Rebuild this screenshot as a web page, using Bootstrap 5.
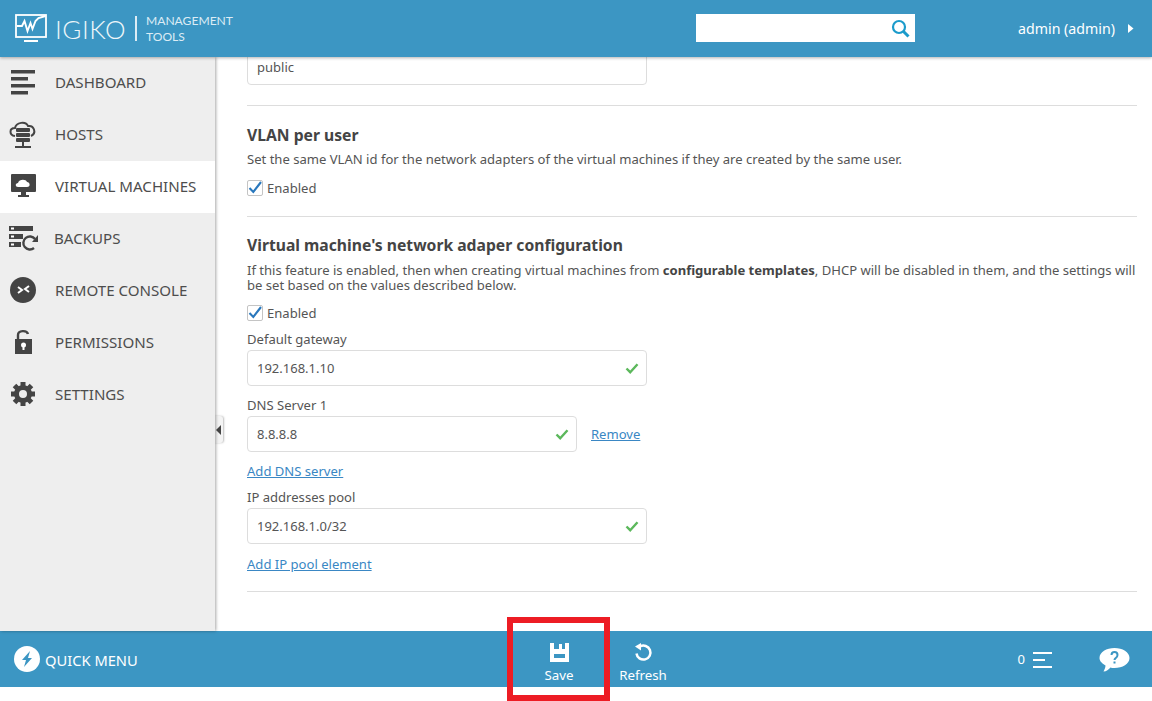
<!DOCTYPE html>
<html lang="en">
<head>
  <meta charset="UTF-8" />
  <title>Igiko Management Tools</title>
  <link href="https://cdn.jsdelivr.net/npm/bootstrap@5.3.2/dist/css/bootstrap.min.css" rel="stylesheet"/>
  <style>
    html, body { height: 701px; overflow: hidden; background: #fff; }
    body { font-family: "Noto Sans", "DejaVu Sans", sans-serif; font-size: 13.07px; color: #555; }
    .app-shell { height: 687px; position: relative; }
    .top-bar { height: 57px; background: #3c96c3; color: #fff; box-shadow: 0 1px 3px rgba(0,0,0,.3); position: relative; z-index: 3; }
    .logo-area { padding-left: 15px; width: 696px; }
    .logo-word { font-family: Lato, sans-serif; font-weight: 300; font-size: 26px; letter-spacing: .5px; line-height: 1; margin-left: 8px; color: #eef6fa; }
    .logo-sep { width: 2px; height: 25px; background: #dcecf5; margin: 0 9px 0 9px; }
    .logo-sub { font-family: Lato, sans-serif; font-size: 12.1px; line-height: 16px; color: #dcecf5; }
    .search-box { width: 219px; height: 28px; background: #fff; padding-right: 5px; margin-bottom: 1px; }
    .user-menu { font-size: 14.2px; margin-right: 18px; gap: 13px; }
    .mid-area { height: 574px; }
    .side-nav { width: 215px; background: #eee; box-shadow: 1px 0 3px rgba(0,0,0,.35); position: relative; z-index: 2; }
    .side-item { height: 52px; font-size: 15.1px; color: #4d4d4d; text-decoration: none; padding-bottom: 2px; }
    .side-item.active-item { background: #fff; }
    .side-ico { width: 55px; flex: none; padding-left: 9px; }
    .side-toggle { position: absolute; left: 214px; top: 359px; width: 9px; height: 27px; background: #f4f4f4; border-radius: 0 3px 3px 0; box-shadow: 1px 0 2px rgba(0,0,0,.25); }
    .page-body { overflow: hidden; padding: 0 15px 0 32px; }
    .scroll-inner { margin-top: -8px; }
    .setting-input { height: 36px; width: 400px; font-size: 13px; color: #555; border-color: #ddd !important; padding: 0 9px; border-radius: 4px; }
    .setting-input.is-valid { background-size: 14px 14px; background-position: right 7px center; padding-right: 30px;
      background-image: url("data:image/svg+xml,%3csvg xmlns='http://www.w3.org/2000/svg' viewBox='0 0 14 14'%3e%3cpath fill='none' stroke='%235cb85c' stroke-width='2.4' d='M1.5 7.5l3.7 3.7 7.3-8'/%3e%3c/svg%3e"); }
    .setting-input.is-valid:focus { box-shadow: none; }
    .short-input { width: 330px; }
    .setting-label { display: block; height: 15px; line-height: 15px; margin: 0 0 3px; }
    .setting-title { font-size: 15.7px; font-weight: 700; color: #444; line-height: 18px; margin: 0; font-family: "Noto Sans", sans-serif; }
    .setting-text { line-height: 15px; margin: 0; }
    .setting-text b { color: #444; }
    .setting-rule { border: 0; border-top: 1px solid #ddd; opacity: 1; margin: 0; }
    .check-row { height: 16px; line-height: 16px; gap: 4px; }
    .setting-check { appearance: none; width: 16px; height: 16px; margin: 0; border: 1px solid #c4c4c4; border-radius: 2px; background: #fff center / 16px no-repeat;
      background-image: url("data:image/svg+xml,%3csvg xmlns='http://www.w3.org/2000/svg' viewBox='0 0 16 16'%3e%3cpath fill='none' stroke='%232a78bd' stroke-width='2.1' d='M2.500 8l3.800 4 7.700-10'/%3e%3c/svg%3e"); }
    .link-line { line-height: 15px; }
    .setting-link { color: #3a87c4; line-height: 15px; }
    .remove-link { margin-left: 14px; }
    .foot-bar { height: 56px; background: #3c96c3; color: #fff; position: relative; }
    .quick-menu { font-size: 14.7px; padding-left: 14px; width: 517px; gap: 5px; }
    .quick-menu span { padding-top: 2px; }
    .foot-actions { font-size: 13.3px; line-height: 15px; }
    .foot-btn { width: 84px; text-align: center; padding-top: 12px; }
    .foot-btn svg { display: block; margin: 0 auto 6px; }
    .foot-right { margin-left: auto; padding-right: 22px; padding-top: 1px; gap: 47px; }
    .red-mark { position: absolute; left: 507px; top: 617px; width: 103px; height: 84px; border: 6px solid #ed1c24; z-index: 5; }
  </style>
</head>
<body>
  <div class="app-shell d-flex flex-column">

    <!-- Header -->
    <div class="top-bar d-flex align-items-center">
      <div class="logo-area d-flex align-items-center">
        <svg width="32" height="29" viewBox="0 0 32 29" fill="none" stroke="#fff">
          <rect x="1" y="1" width="30" height="22" stroke-width="1.800"/>
          <path d="M2 12h5l2.500-5 3 10 3-8 2 6 3-8 3-3 7-2" stroke-width="1.900"/>
          <path d="M9 27h14" stroke-width="2"/>
        </svg>
        <span class="logo-word">IGIKO</span>
        <span class="logo-sep"></span>
        <span class="logo-sub">MANAGEMENT<br>TOOLS</span>
      </div>
      <div class="search-box d-flex align-items-center justify-content-end">
        <svg width="19" height="19" viewBox="0 0 19 19" fill="none" stroke="#1b9bcb"><circle cx="8" cy="8" r="6" stroke-width="2.200"/><path d="M12.500 12.500l5 5" stroke-width="3"/></svg>
      </div>
      <div class="user-menu ms-auto d-flex align-items-center">
        <span>admin (admin)</span>
        <svg width="6" height="9" viewBox="0 0 6 9"><path fill="#fff" d="M0 0l5.500 4.500-5.500 4.500z"/></svg>
      </div>
    </div>

    <div class="mid-area d-flex position-relative">
      <!-- Sidebar -->
      <nav class="side-nav d-flex flex-column flex-shrink-0">
        <a class="side-item d-flex align-items-center" href="#">
          <span class="side-ico"><svg width="26" height="26" viewBox="0 0 26 26" fill="#444"><rect x="2" y="1" width="24" height="3.500"/><rect x="2" y="8" width="17" height="3.500"/><rect x="2" y="15" width="24" height="3.500"/><rect x="2" y="22" width="17" height="3.500"/></svg></span>DASHBOARD
        </a>
        <a class="side-item d-flex align-items-center" href="#">
          <span class="side-ico"><svg width="28" height="28" viewBox="0 0 28 28"><path fill="none" stroke="#444" stroke-width="2" d="M6 16c-6-1-6-8 0-8 1-6 11-7 13-2 6-1 9 7 3 10"/><rect x="7" y="8" width="14" height="4" rx="1" fill="#444"/><rect x="7" y="13" width="14" height="4" rx="1" fill="#444"/><rect x="7" y="18" width="14" height="4" rx="1" fill="#444"/><path stroke="#444" stroke-width="2" d="M14 22v4M6 27h16"/></svg></span>HOSTS
        </a>
        <a class="side-item active-item d-flex align-items-center" href="#">
          <span class="side-ico"><svg width="28" height="26" viewBox="0 0 28 26"><rect x="2" y="1" width="25" height="18" rx="1" fill="#444"/><path fill="#fff" d="M9 14c-3 0-3-4 0-4 1-4 8-4 9-1 3 0 4 5 0 5z"/><path fill="#444" d="M12 19h5v3h3v2H9v-2h3z"/></svg></span>VIRTUAL MACHINES
        </a>
        <a class="side-item d-flex align-items-center" href="#">
          <span class="side-ico"><svg width="30" height="27" viewBox="0 0 30 27"><rect y="1" width="24" height="5" fill="#444"/><rect x="2" y="2.500" width="3" height="2" fill="#fff"/><rect y="9" width="14" height="5" fill="#444"/><rect x="2" y="10.500" width="3" height="2" fill="#fff"/><rect y="17" width="12" height="5" fill="#444"/><rect x="2" y="18.500" width="3" height="2" fill="#fff"/><path fill="none" stroke="#444" stroke-width="2.400" d="M26 14a6.500 6.500 0 1 0 -1 9"/><path fill="#444" d="M29 10v7h-6z"/></svg></span><span style="margin-left:-1px">BACKUPS</span>
        </a>
        <a class="side-item d-flex align-items-center" href="#">
          <span class="side-ico"><svg width="28" height="28" viewBox="0 0 28 28"><circle cx="14" cy="14" r="13" fill="#444"/><path fill="none" stroke="#fff" stroke-width="2" d="M9 11l4 3-4 3M20 10l-4 3 4 3"/></svg></span>REMOTE CONSOLE
        </a>
        <a class="side-item d-flex align-items-center" href="#">
          <span class="side-ico"><svg width="28" height="26" viewBox="0 0 28 26"><rect x="6" y="10" width="17" height="15" fill="#444"/><path fill="none" stroke="#444" stroke-width="2.400" d="M9 10V6c0-5 9-5 10-1"/><circle cx="14.500" cy="16" r="2.500" fill="#fff"/><rect x="13.500" y="17" width="2" height="4" fill="#fff"/></svg></span>PERMISSIONS
        </a>
        <a class="side-item d-flex align-items-center" href="#">
          <span class="side-ico"><svg width="28" height="26" viewBox="0 0 26 26"><circle cx="13" cy="13" r="6.500" fill="none" stroke="#444" stroke-width="5"/><path stroke="#444" stroke-width="5" d="M13 1v5M13 20v5M1 13h5M20 13h5M4.500 4.500l3.500 3.500M18 18l3.500 3.500M21.500 4.500L18 8M8 18l-3.500 3.500"/></svg></span>SETTINGS
        </a>
      </nav>
      <div class="side-toggle d-flex align-items-center justify-content-center">
        <svg width="5" height="10" viewBox="0 0 5 10"><path fill="#444" d="M5 0v10L0 5z"/></svg>
      </div>

      <!-- Settings form -->
      <main class="page-body flex-grow-1">
        <div class="scroll-inner">
          <input class="form-control setting-input" type="text" value="public">
          <hr class="setting-rule" style="margin-top:20px">

          <h6 class="setting-title" style="margin-top:20px">VLAN per user</h6>
          <p class="setting-text" style="margin-top:8px">Set the same VLAN id for the network adapters of the virtual machines if they are created by the same user.</p>
          <label class="check-row d-flex align-items-center" style="margin-top:13px"><input class="setting-check" type="checkbox" checked> Enabled</label>
          <hr class="setting-rule" style="margin-top:20px">

          <h6 class="setting-title" style="margin-top:19px">Virtual machine's network adaper configuration</h6>
          <p class="setting-text" style="margin-top:9px">If this feature is enabled, then when creating virtual machines from <b>configurable templates</b>, DHCP will be disabled in them, and the settings will be set based on the values described below.</p>
          <label class="check-row d-flex align-items-center" style="margin-top:12px"><input class="setting-check" type="checkbox" checked> Enabled</label>

          <label class="setting-label" style="margin-top:11px">Default gateway</label>
          <input class="form-control setting-input is-valid" type="text" value="192.168.1.10">

          <label class="setting-label" style="margin-top:12px">DNS Server 1</label>
          <div class="d-flex align-items-center">
            <input class="form-control setting-input short-input is-valid" type="text" value="8.8.8.8">
            <a class="setting-link remove-link" href="#">Remove</a>
          </div>
          <div class="link-line" style="margin-top:12px"><a class="setting-link" href="#">Add DNS server</a></div>

          <label class="setting-label" style="margin-top:11px">IP addresses pool</label>
          <input class="form-control setting-input is-valid" type="text" value="192.168.1.0/32">
          <div class="link-line" style="margin-top:13px"><a class="setting-link" href="#">Add IP pool element</a></div>
          <hr class="setting-rule" style="margin-top:19px">
        </div>
      </main>
    </div>

    <!-- Footer -->
    <div class="foot-bar d-flex">
      <div class="quick-menu d-flex align-items-center">
        <svg width="26" height="26" viewBox="0 0 26 26"><circle cx="13" cy="13" r="13" fill="#fff"/><path fill="#3c96c3" d="M16 5l-8 9h4l-2 7 8-9h-4z"/></svg>
        <span>QUICK MENU</span>
      </div>
      <div class="foot-actions d-flex">
        <div class="foot-btn">
          <svg width="19" height="19" viewBox="0 0 19 19"><path fill="#fff" fill-rule="evenodd" d="M0 0h19v19H0zM4 11v4h11v-4zM4 0v6h11V0z"/><rect x="9" y="1" width="3" height="5" fill="#fff"/></svg>
          Save
        </div>
        <div class="foot-btn">
          <svg width="19" height="19" viewBox="0 0 19 19"><path fill="none" stroke="#fff" stroke-width="2.500" d="M6 3.500a7 7 0 1 1 -3.500 7"/><path fill="#fff" d="M7 0v7.500L1 3.500z"/></svg>
          Refresh
        </div>
      </div>
      <div class="foot-right d-flex align-items-center">
        <div class="d-flex align-items-center gap-2">
          <span>0</span>
          <svg width="19" height="16" viewBox="0 0 19 16" fill="#fff"><rect width="19" height="2"/><rect y="7" width="12" height="2"/><rect y="14" width="19" height="2"/></svg>
        </div>
        <svg width="31" height="26" viewBox="0 0 31 26"><path fill="#fff" d="M15.500 1c8 0 15 4 15 10s-7 10-15 10c-2 0-3 0-4-.500-2 2-4 4-7 4 1-2 2-4 2-6-3-2-6-4-6-7.500 0-6 7-10 15-10z"/><path fill="none" stroke="#3c96c3" stroke-width="2" d="M12.500 8c0-4 6-4 6 0 0 3-3 3-3 5"/><rect x="14.500" y="14.500" width="2" height="2" fill="#3c96c3"/></svg>
      </div>
    </div>
  </div>
  <div class="red-mark"></div>
  <script src="https://cdn.jsdelivr.net/npm/bootstrap@5.3.2/dist/js/bootstrap.bundle.min.js"></script>
</body>
</html>
